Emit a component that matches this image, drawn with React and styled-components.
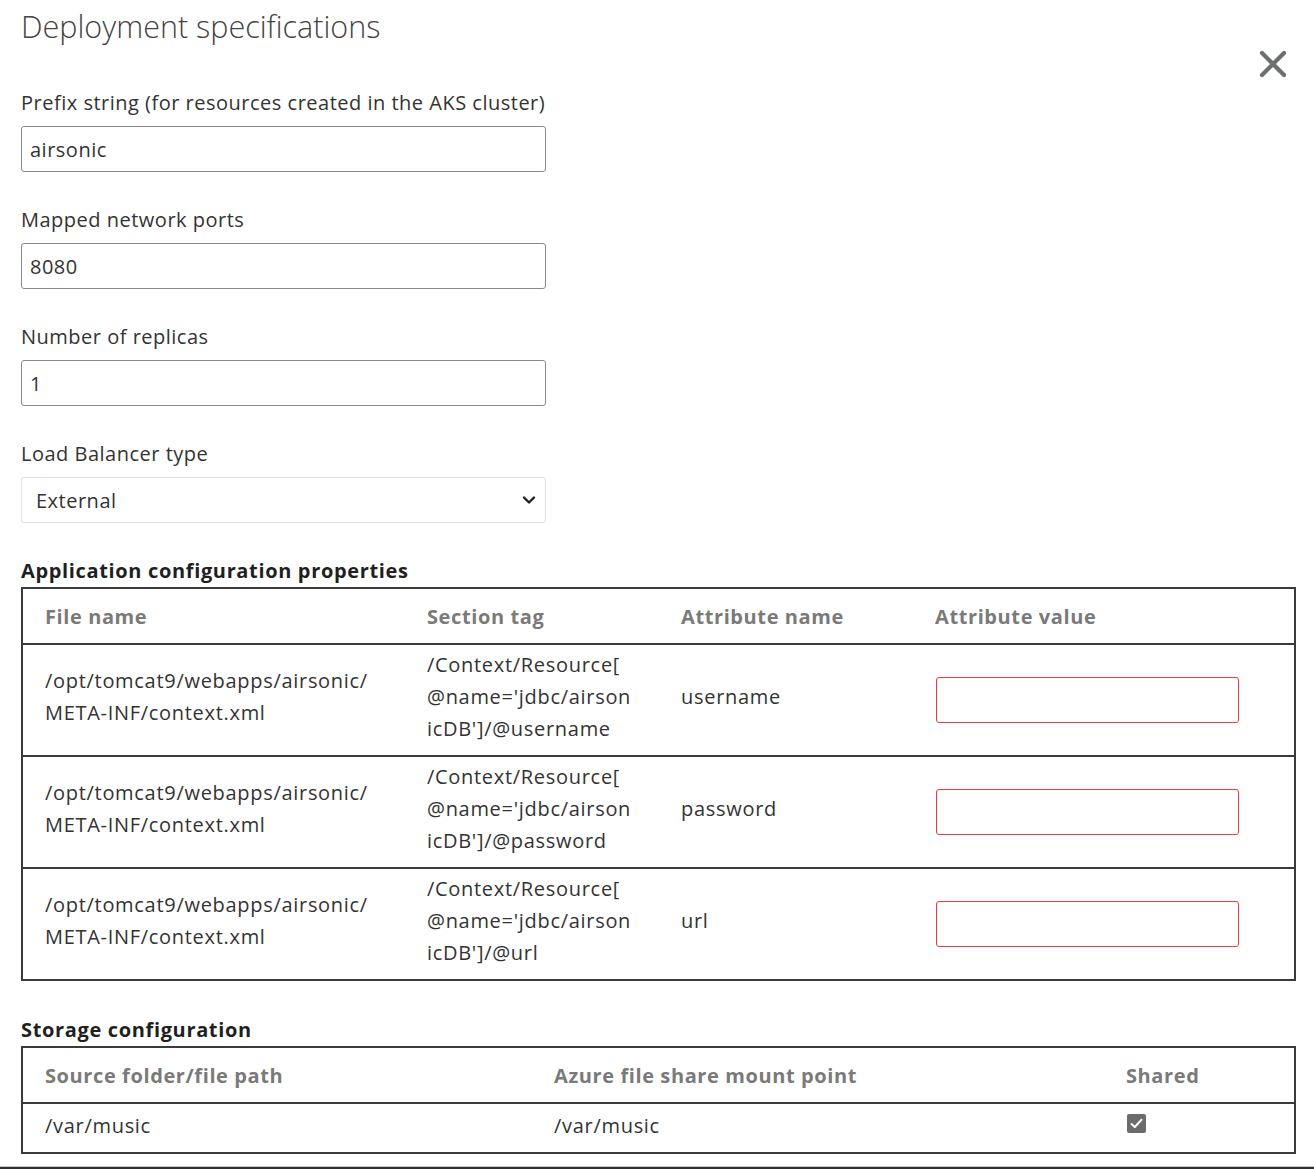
import React from "react";
import styled, { createGlobalStyle } from "styled-components";

const Global = createGlobalStyle`
  html, body { margin: 0; padding: 0; background: #ffffff; }
  body { font-family: "Open Sans", "Noto Sans", Arial, sans-serif; color: #333333; }
  * { box-sizing: border-box; }
`;

const Page = styled.div`
  position: relative;
  width: 1314px;
  height: 1169px;
  padding: 6px 18px 0 21px;
  overflow: hidden;
  display: flex;
  flex-direction: column;
  font-size: 20px;
  letter-spacing: 0.5px;
`;

const Title = styled.h1`
  margin: 0;
  font-size: 30.5px;
  line-height: 40px;
  font-weight: 300;
  color: #444;
  letter-spacing: 0;
`;

const CloseButton = styled.button`
  position: absolute;
  top: 50px;
  left: 1259px;
  width: 28px;
  height: 28px;
  padding: 0;
  border: 0;
  background: transparent;
  display: flex;
`;

const Form = styled.div`
  display: flex;
  flex-direction: column;
  gap: 36px;
  margin-top: 45px;
  width: 525px;
`;

const Field = styled.div`
  display: flex;
  flex-direction: column;
  gap: 11px;
`;

const Label = styled.label`
  font-size: 20px;
  line-height: 24px;
  color: #333;
`;

const TextInput = styled.div`
  height: 46px;
  border: 1.5px solid #8a8a8a;
  border-radius: 3px;
  padding: 0 8px;
  display: flex;
  align-items: center;
  font-size: 20px;
  color: #333;
`;

const Select = styled.div`
  height: 46px;
  border: 1px solid #e3e3e3;
  border-radius: 3px;
  padding: 0 9px 0 14px;
  display: flex;
  align-items: center;
  justify-content: space-between;
  font-size: 20px;
  color: #333;
`;

const SectionHeading = styled.h2`
  margin: ${(p) => p.$top}px 0 4px;
  font-size: 20px;
  line-height: 24px;
  font-weight: 700;
  color: #1f1f1f;
  letter-spacing: 0.65px;
`;

const Table = styled.table`
  width: 1275px;
  border-collapse: collapse;
  border: 2px solid #3a3a3a;
  table-layout: fixed;
  font-size: 20px;
`;

const Th = styled.th`
  text-align: left;
  font-weight: 700;
  color: #7a7a7a;
  height: 56px;
  padding: 0 0 0 22px;
  border-bottom: 2px solid #3a3a3a;
  width: ${(p) => p.$w}px;
  letter-spacing: 0.6px;
`;

const Tr = styled.tr`
  border-bottom: 2px solid #3a3a3a;
`;

const Td = styled.td`
  padding: 0 0 ${(p) => p.$pb || 0}px 22px;
  height: ${(p) => p.$h}px;
  line-height: 32px;
  vertical-align: middle;
  color: #333;
  letter-spacing: 0.7px;
`;

const Line = styled.span`
  display: block;
  white-space: nowrap;
`;

const ErrorInput = styled.div`
  width: 303px;
  height: 46px;
  margin-left: 1px;
  border: 1.5px solid #f03a3a;
  border-radius: 3px;
`;

const Checkbox = styled.span`
  display: inline-flex;
  width: 19px;
  height: 19px;
  border-radius: 2px;
  background: #6b6b6b;
  align-items: center;
  justify-content: center;
  margin-left: 1px;
  vertical-align: middle;
  position: relative;
  top: -6px;
`;

const BottomRule = styled.div`
  margin-top: auto;
  margin-left: -21px;
  margin-right: -18px;
  height: 3px;
  border-top: 1px solid #c8c8c8;
  background: #2f2f2f;
`;

const rows = [
  { attr: "username" },
  { attr: "password" },
  { attr: "url" },
];

export default function App() {
  return (
    <>
      <Global />
      <Page>
        <Title>Deployment specifications</Title>
        <CloseButton aria-label="Close">
          <svg width="28" height="28" viewBox="0 0 28 28">
            <path d="M3 3 L25 25 M25 3 L3 25" stroke="#6b6f6d" strokeWidth="4.2" strokeLinecap="round" />
          </svg>
        </CloseButton>
        <Form>
          <Field>
            <Label>Prefix string (for resources created in the AKS cluster)</Label>
            <TextInput>airsonic</TextInput>
          </Field>
          <Field>
            <Label>Mapped network ports</Label>
            <TextInput>8080</TextInput>
          </Field>
          <Field>
            <Label>Number of replicas</Label>
            <TextInput>1</TextInput>
          </Field>
          <Field>
            <Label>Load Balancer type</Label>
            <Select>
              External
              <svg width="14" height="10" viewBox="0 0 14 10">
                <path d="M2 2.5 L7 7.5 L12 2.5" fill="none" stroke="#222" strokeWidth="2.4" strokeLinecap="round" strokeLinejoin="round" />
              </svg>
            </Select>
          </Field>
        </Form>

        <SectionHeading $top={36}>Application configuration properties</SectionHeading>
        <Table>
          <thead>
            <tr>
              <Th $w={383}>File name</Th>
              <Th $w={254}>Section tag</Th>
              <Th $w={254}>Attribute name</Th>
              <Th>Attribute value</Th>
            </tr>
          </thead>
          <tbody>
            {rows.map((r) => (
              <Tr key={r.attr}>
                <Td $h={112} $pb={6}>
                  <Line>/opt/tomcat9/webapps/airsonic/</Line>
                  <Line>META-INF/context.xml</Line>
                </Td>
                <Td $h={112} $pb={6}>
                  <Line>/Context/Resource[</Line>
                  <Line>@name='jdbc/airson</Line>
                  <Line>icDB']/@{r.attr}</Line>
                </Td>
                <Td $h={112} $pb={6}>{r.attr}</Td>
                <Td $h={112}>
                  <ErrorInput />
                </Td>
              </Tr>
            ))}
          </tbody>
        </Table>

        <SectionHeading $top={37}>Storage configuration</SectionHeading>
        <Table>
          <thead>
            <tr>
              <Th $w={510}>Source folder/file path</Th>
              <Th $w={572}>Azure file share mount point</Th>
              <Th>Shared</Th>
            </tr>
          </thead>
          <tbody>
            <Tr>
              <Td $h={50} $pb={4}>/var/music</Td>
              <Td $h={50} $pb={4}>/var/music</Td>
              <Td $h={50}>
                <Checkbox>
                  <svg width="13" height="11" viewBox="0 0 13 11">
                    <path d="M1.5 6 L4.8 9 L11.5 1.8" fill="none" stroke="#fff" strokeWidth="2" strokeLinecap="round" strokeLinejoin="round" />
                  </svg>
                </Checkbox>
              </Td>
            </Tr>
          </tbody>
        </Table>
        <BottomRule />
      </Page>
    </>
  );
}
